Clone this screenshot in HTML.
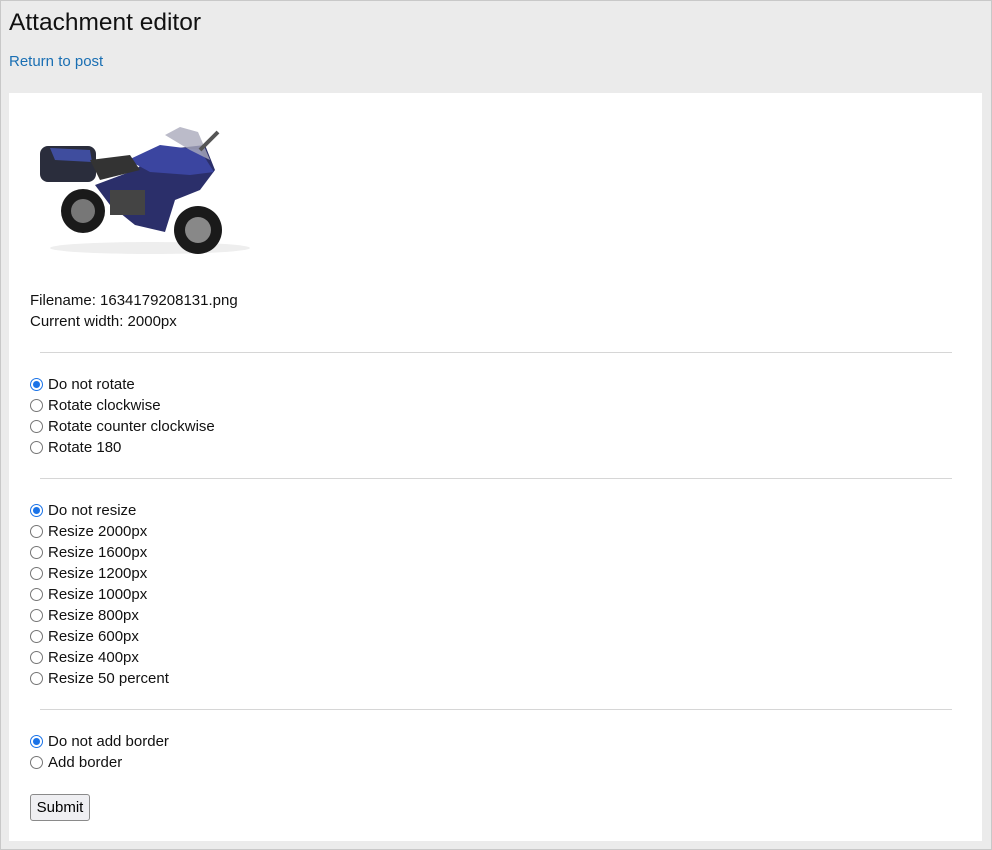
<!DOCTYPE html>
<html><head><style>
html,body{margin:0;padding:0}
body{width:992px;height:850px;background:#ebebeb;font-family:"Liberation Sans",Arial,sans-serif;position:relative;overflow:hidden}
.frame{position:absolute;left:0;top:0;width:990px;height:848px;border:1px solid #c8c8c8}
h1{position:absolute;left:9px;top:9px;margin:0;font-size:24.5px;font-weight:normal;color:#111}
a{position:absolute;left:9px;top:53px;color:#1a6fb3;text-decoration:none;font-size:15px}
.panel{position:absolute;left:9px;top:93px;width:973px;height:748px;background:#fff}
.t{position:absolute;left:30px;font-size:15px;color:#111;line-height:21px}
.r{position:absolute;left:30px;font-size:15px;color:#111;line-height:21px;padding-left:18px}
.r:before{content:"";position:absolute;left:0;top:4px;width:11px;height:11px;border:1.5px solid #767676;border-radius:50%;background:#fff}
.r.on:before{border-color:#1a73e8;background:radial-gradient(circle,#1a73e8 0 3.2px,#fff 3.8px)}
hr{position:absolute;left:40px;width:912px;border:0;border-top:1px solid #d6d6d6;margin:0}
button{position:absolute;left:30px;top:794px;width:60px;height:27px;font-family:"Liberation Sans",Arial,sans-serif;font-size:15px;background:#efeff2;border:1px solid #8a8a8a;border-radius:3px;color:#000;padding:0}
</style></head><body>
<div class="frame"></div>
<h1>Attachment editor</h1>
<a>Return to post</a>
<div class="panel"></div>
<svg style="position:absolute;left:30px;top:110px" width="226" height="155" viewBox="30 110 226 155">
<ellipse cx="150" cy="248" rx="100" ry="6" fill="#eee"/>
<rect x="40" y="146" width="56" height="36" rx="8" fill="#2a2d3c"/>
<path d="M50 148 L90 150 L92 162 L55 160Z" fill="#3f4d9e"/>
<circle cx="83" cy="211" r="22" fill="#1a1a1a"/><circle cx="83" cy="211" r="12" fill="#777"/>
<circle cx="198" cy="230" r="24" fill="#1a1a1a"/><circle cx="198" cy="230" r="13" fill="#888"/>
<path d="M95 185 L135 170 L160 150 L205 145 L215 170 L200 190 L175 200 L165 232 L135 225 L110 205Z" fill="#2b2f6a"/>
<path d="M128 160 L160 145 L200 150 L214 172 L190 175 L150 172Z" fill="#3b45a0"/>
<path d="M165 135 L180 127 L198 132 L210 160 L190 150Z" fill="#aab" opacity=".8"/>
<path d="M90 160 L130 155 L140 170 L100 180Z" fill="#333"/>
<rect x="110" y="190" width="35" height="25" fill="#444"/>
<line x1="200" y1="150" x2="218" y2="132" stroke="#555" stroke-width="4"/>
</svg>
<div class="t" style="top:290px">Filename: 1634179208131.png</div>
<div class="t" style="top:311px">Current width: 2000px</div>
<hr style="top:352px">
<div class="r on" style="top:374px">Do not rotate</div>
<div class="r" style="top:395px">Rotate clockwise</div>
<div class="r" style="top:416px">Rotate counter clockwise</div>
<div class="r" style="top:437px">Rotate 180</div>
<hr style="top:478px">
<div class="r on" style="top:500px">Do not resize</div>
<div class="r" style="top:521px">Resize 2000px</div>
<div class="r" style="top:542px">Resize 1600px</div>
<div class="r" style="top:563px">Resize 1200px</div>
<div class="r" style="top:584px">Resize 1000px</div>
<div class="r" style="top:605px">Resize 800px</div>
<div class="r" style="top:626px">Resize 600px</div>
<div class="r" style="top:647px">Resize 400px</div>
<div class="r" style="top:668px">Resize 50 percent</div>
<hr style="top:709px">
<div class="r on" style="top:731px">Do not add border</div>
<div class="r" style="top:752px">Add border</div>
<button>Submit</button>
</body></html>
